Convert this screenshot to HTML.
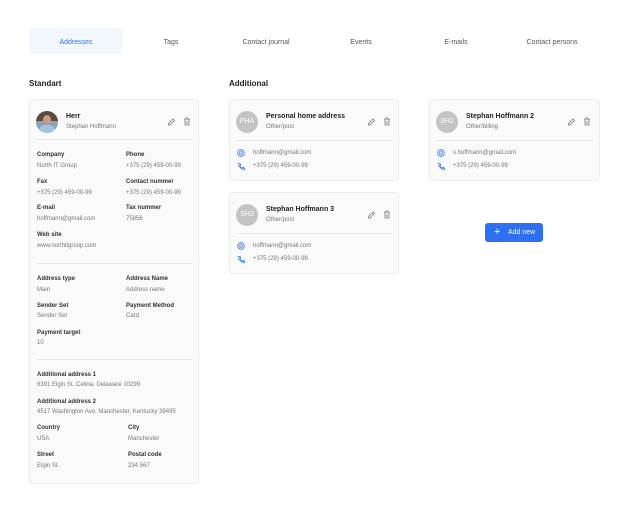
<!DOCTYPE html>
<html><head><meta charset="utf-8"><style>
*{margin:0;padding:0;box-sizing:border-box}
body{width:628px;height:512px;background:#fff;font-family:"Liberation Sans",sans-serif;position:relative;overflow:hidden;color:#222}
.a{position:absolute;white-space:nowrap}
.tab{position:absolute;top:39px;font-size:7px;color:#555;transform:translateX(-50%)}
.h{font-size:8px;font-weight:bold;color:#222}
.card{position:absolute;background:#fafafa;border:1px solid #ececec;border-radius:4px}
.lb{position:absolute;font-size:6px;font-weight:bold;color:#333;white-space:nowrap}
.vl{position:absolute;font-size:6px;color:#777;white-space:nowrap}
.div{position:absolute;height:1px;background:#e8e8e8}
.av{position:absolute;width:22px;height:22px;border-radius:50%;background:#c4c4c4;color:#fff;font-size:7px;text-align:center;line-height:22px}
.t{position:absolute;font-size:7px;font-weight:bold;color:#222;white-space:nowrap}
.s{position:absolute;font-size:6px;color:#777;white-space:nowrap}
</style></head><body>
<div class="a" style="left:29px;top:28px;width:94px;height:26px;background:#f3f7fe;border-radius:4px"></div>
<div class="tab" style="left:76px;color:#3b74e8">Addresses</div>
<div class="tab" style="left:171px">Tags</div>
<div class="tab" style="left:266px">Contact journal</div>
<div class="tab" style="left:361px">Events</div>
<div class="tab" style="left:456px">E-mails</div>
<div class="tab" style="left:552px">Contact persons</div>

<div class="a h" style="left:29px;top:79px">Standart</div>
<div class="a h" style="left:229px;top:79px">Additional</div>

<svg width="0" height="0" style="position:absolute"><defs>
<g id="ed"><path d="M1 8h3M1.5 6.5L6 2l1.5 1.5L3 8H1.5z" fill="none" stroke="#777" stroke-width="0.8"/></g>
<g id="tr"><path d="M1 2h6M3 1h2M2 2v6h4V2M4 4v3" fill="none" stroke="#777" stroke-width="0.8"/></g>
<g id="at"><circle cx="4" cy="4" r="3.3" fill="none" stroke="#3b74e8" stroke-width="0.8"/><circle cx="4" cy="4" r="1.4" fill="none" stroke="#3b74e8" stroke-width="0.8"/></g>
<g id="ph"><path d="M1.5 1.5l1.5 0 .8 1.8-1 .8c.5 1 1.3 1.8 2.2 2.2l.8-1 1.8.8v1.4C5 7.6 1.2 4.5 1.5 1.5z" fill="none" stroke="#3b74e8" stroke-width="0.8"/></g>
</defs></svg>

<div class="card" style="left:29px;top:99px;width:170px;height:385px">
 <div class="a" style="left:6px;top:11px;width:22px;height:22px;border-radius:50%;background:#8aa3b8;overflow:hidden">
  <div class="a" style="left:0;top:0;width:22px;height:10px;background:#5a4a42"></div>
  <div class="a" style="left:7px;top:4px;width:8px;height:9px;border-radius:50%;background:#c99b80"></div>
  <div class="a" style="left:3px;top:14px;width:16px;height:10px;border-radius:6px 6px 0 0;background:#a7c3de"></div>
 </div>
 <div class="t" style="left:36px;top:13px">Herr</div>
 <div class="s" style="left:36px;top:24px">Stephan Hoffmann</div>
 <svg class="a" style="left:137px;top:17px" width="9" height="9"><use href="#ed"/></svg>
 <svg class="a" style="left:153px;top:17px" width="9" height="9"><use href="#tr"/></svg>
 <div class="div" style="left:7px;top:39px;width:156px"></div>
 <div class="lb" style="left:7px;top:52px">Company</div><div class="vl" style="left:7px;top:63px">North IT Group</div>
 <div class="lb" style="left:96px;top:52px">Phone</div><div class="vl" style="left:96px;top:63px">+375 (29) 459-00-99</div>
 <div class="lb" style="left:7px;top:79px">Fax</div><div class="vl" style="left:7px;top:90px">+375 (29) 459-00-99</div>
 <div class="lb" style="left:96px;top:79px">Contact nummer</div><div class="vl" style="left:96px;top:90px">+375 (29) 459-00-99</div>
 <div class="lb" style="left:7px;top:105px">E-mail</div><div class="vl" style="left:7px;top:116px">hoffmann@gmail.com</div>
 <div class="lb" style="left:96px;top:105px">Tax nummer</div><div class="vl" style="left:96px;top:116px">75856</div>
 <div class="lb" style="left:7px;top:132px">Web site</div><div class="vl" style="left:7px;top:143px">www.northitgroup.com</div>
 <div class="div" style="left:7px;top:163px;width:156px"></div>
 <div class="lb" style="left:7px;top:176px">Address type</div><div class="vl" style="left:7px;top:187px">Main</div>
 <div class="lb" style="left:96px;top:176px">Address Name</div><div class="vl" style="left:96px;top:187px">Address name</div>
 <div class="lb" style="left:7px;top:203px">Sender Set</div><div class="vl" style="left:7px;top:213px">Sender Set</div>
 <div class="lb" style="left:96px;top:203px">Payment Method</div><div class="vl" style="left:96px;top:213px">Card</div>
 <div class="lb" style="left:7px;top:230px">Payment target</div><div class="vl" style="left:7px;top:240px">10</div>
 <div class="div" style="left:7px;top:259px;width:156px"></div>
 <div class="lb" style="left:7px;top:272px">Additional address 1</div><div class="vl" style="left:7px;top:282px">6391 Elgin St. Celina, Delaware 10299</div>
 <div class="lb" style="left:7px;top:299px">Additional address 2</div><div class="vl" style="left:7px;top:309px">4517 Washington Ave. Manchester, Kentucky 39495</div>
 <div class="lb" style="left:7px;top:325px">Country</div><div class="vl" style="left:7px;top:336px">USA</div>
 <div class="lb" style="left:98px;top:325px">City</div><div class="vl" style="left:98px;top:336px">Manchester</div>
 <div class="lb" style="left:7px;top:352px">Street</div><div class="vl" style="left:7px;top:363px">Elgin St.</div>
 <div class="lb" style="left:98px;top:352px">Postal code</div><div class="vl" style="left:98px;top:363px">234 567</div>
</div>

<div class="card" style="left:229px;top:99px;width:170px;height:82px">
 <div class="av" style="left:6px;top:11px">PHA</div>
 <div class="t" style="left:36px;top:13px">Personal home address</div>
 <div class="s" style="left:36px;top:24px">Other/post</div>
 <svg class="a" style="left:137px;top:17px" width="9" height="9"><use href="#ed"/></svg>
 <svg class="a" style="left:153px;top:17px" width="9" height="9"><use href="#tr"/></svg>
 <div class="div" style="left:7px;top:40px;width:156px"></div>
 <svg class="a" style="left:7px;top:49px" width="8" height="8"><use href="#at"/></svg>
 <div class="vl" style="left:23px;top:50px">hoffmann@gmail.com</div>
 <svg class="a" style="left:7px;top:62px" width="8" height="8"><use href="#ph"/></svg>
 <div class="vl" style="left:23px;top:63px">+375 (29) 459-00-99</div>
</div>
<div class="card" style="left:229px;top:192px;width:170px;height:82px">
 <div class="av" style="left:6px;top:11px">SH3</div>
 <div class="t" style="left:36px;top:13px">Stephan Hoffmann 3</div>
 <div class="s" style="left:36px;top:24px">Other/post</div>
 <svg class="a" style="left:137px;top:17px" width="9" height="9"><use href="#ed"/></svg>
 <svg class="a" style="left:153px;top:17px" width="9" height="9"><use href="#tr"/></svg>
 <div class="div" style="left:7px;top:40px;width:156px"></div>
 <svg class="a" style="left:7px;top:49px" width="8" height="8"><use href="#at"/></svg>
 <div class="vl" style="left:23px;top:50px">hoffmann@gmail.com</div>
 <svg class="a" style="left:7px;top:62px" width="8" height="8"><use href="#ph"/></svg>
 <div class="vl" style="left:23px;top:63px">+375 (29) 459-00-99</div>
</div>
<div class="card" style="left:429px;top:99px;width:171px;height:82px">
 <div class="av" style="left:6px;top:11px">SH2</div>
 <div class="t" style="left:36px;top:13px">Stephan Hoffmann 2</div>
 <div class="s" style="left:36px;top:24px">Other/billing</div>
 <svg class="a" style="left:137px;top:17px" width="9" height="9"><use href="#ed"/></svg>
 <svg class="a" style="left:153px;top:17px" width="9" height="9"><use href="#tr"/></svg>
 <div class="div" style="left:7px;top:40px;width:156px"></div>
 <svg class="a" style="left:7px;top:49px" width="8" height="8"><use href="#at"/></svg>
 <div class="vl" style="left:23px;top:50px">s.hoffmann@gmail.com</div>
 <svg class="a" style="left:7px;top:62px" width="8" height="8"><use href="#ph"/></svg>
 <div class="vl" style="left:23px;top:63px">+375 (29) 459-00-99</div>
</div>

<div class="a" style="left:485px;top:223px;width:58px;height:19px;background:#2f6ff3;border-radius:3px;color:#fff;font-size:7px;line-height:19px">
 <span class="a" style="left:9px;top:0;font-size:11px;line-height:18px">+</span>
 <span class="a" style="left:23px;top:0">Add new</span>
</div>
</body></html>
